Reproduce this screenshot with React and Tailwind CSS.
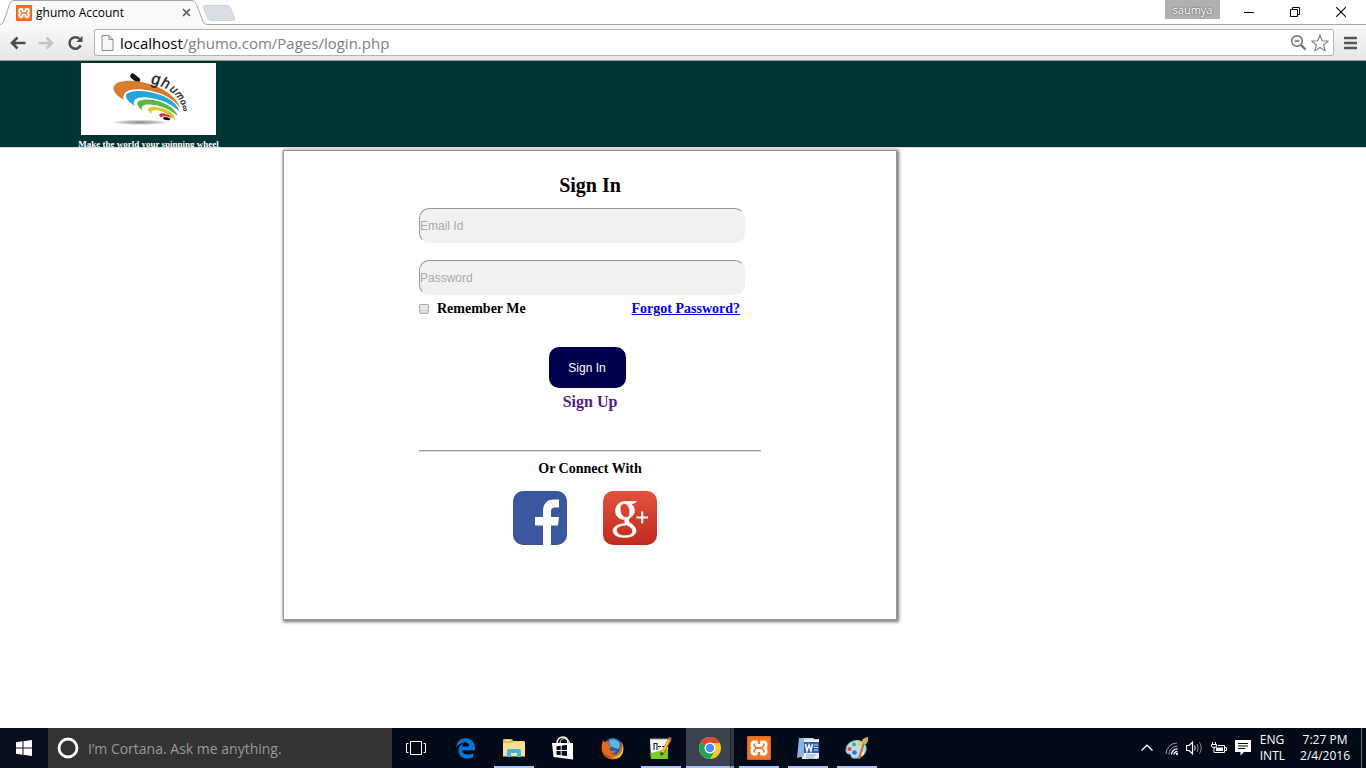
import React from "react";
import { FaEdgeLegacy } from "react-icons/fa";

const ui = "font-['Open_Sans','Noto_Sans',sans-serif]";
const serif = "font-['Liberation_Serif',serif]";
const sans = "font-['Liberation_Sans',sans-serif]";

function XamppIcon({ className }) {
  return (
    <svg className={className} viewBox="0 0 24 24" aria-hidden="true">
      <rect width="24" height="24" rx="2" fill="#f37623" />
      <path d="M.700 .7H23.300V23.300H.7Z" fill="none" stroke="#d9631a" strokeWidth="1" />
      <path d="M7 6H9.500V8.500Q9.500 9.500 10.500 9.500H13.500Q14.500 9.500 14.500 8.500V6H17Q19 6 19 8V10.500L17.500 12L19 13.500V16Q19 18 17 18H14.500V15.500Q14.500 14.500 13.500 14.500H10.500Q9.500 14.500 9.500 15.500V18H7Q5 18 5 16V13.500L6.500 12L5 10.500V8Q5 6 7 6Z" fill="none" stroke="#fff" strokeWidth="2.800" strokeLinejoin="round" />
    </svg>
  );
}

function TabStrip() {
  return (
    <div className={`relative z-10 -mb-px flex h-[25px] items-start bg-white ${ui}`}>
      <div className="relative h-[25px] w-[240px] shrink-0">
        <svg className="absolute inset-0" width="240" height="25" viewBox="0 0 240 25" aria-hidden="true">
          <path d="M0 24.500C3 24 3.500 22 4.500 19L9.500 4.500C10.500 1.500 12 .5 14 .5H191C194 .5 195.500 1.500 196.500 4.500L202.500 20C203.500 23 205 24.500 208 24.500V25H0Z" fill="#fafafa" />
          <path d="M0 24.500C3 24 3.500 22 4.500 19L9.500 4.500C10.500 1.500 12 .5 14 .5H191C194 .5 195.500 1.500 196.500 4.500L202.500 20C203.500 23 205 24.500 208 24.500H240" fill="none" stroke="#a5a5a5" />
          <path d="M205 5.500H227C229 5.500 230 6.500 230.500 8L234.500 18C235 20 234.500 20.500 232.500 20.500H212C209.500 20.500 208.500 20 207.500 18L203.500 8C203 6.500 203 5.500 205 5.500Z" fill="#d9dee5" stroke="#cdd2d9" />
        </svg>
        <div className="relative flex h-[25px] items-center pl-4">
          <XamppIcon className="size-4" />
          <span className="ml-1 w-[140px] text-[12px] leading-4">ghumo Account</span>
          <button aria-label="Close tab" className="ml-1.5 text-[#555]">
            <svg width="9" height="9" viewBox="0 0 9 9"><path d="M1 1L8 8M8 1L1 8" stroke="currentColor" strokeWidth="1.600" /></svg>
          </button>
        </div>
      </div>
      <div className="h-full flex-1 border-b border-[#a5a5a5]" />
      <div className="flex h-full items-start border-b border-[#a5a5a5] pr-0.5">
        <button className="mr-1.5 h-[19px] w-[55px] bg-[#b0b0b0] text-[11px] leading-[18px] text-white [text-shadow:0_0_2px_#333]">saumya</button>
        <button aria-label="Minimize" className="flex h-6 w-[46px] items-center justify-center">
          <svg width="10" height="10" viewBox="0 0 10 10"><path d="M0 5.500H10" stroke="#000" /></svg>
        </button>
        <button aria-label="Restore" className="flex h-6 w-[46px] items-center justify-center">
          <svg width="10" height="10" viewBox="0 0 10 10"><path d="M.5 2.500H7.500V9.500H.5ZM2.500 2.500V.5H9.500V7.500H7.500" fill="none" stroke="#000" /></svg>
        </button>
        <button aria-label="Close" className="flex h-6 w-[46px] items-center justify-center">
          <svg width="10" height="10" viewBox="0 0 10 10"><path d="M0 0L10 10M10 0L0 10" stroke="#000" strokeWidth="1.100" /></svg>
        </button>
      </div>
    </div>
  );
}

function Toolbar() {
  return (
    <div className={`flex h-[37px] items-center border-b border-[#9b9b9b] bg-linear-to-b from-[#fafafa] to-[#e6e6e6] pt-px pr-[9px] pl-[9px] ${ui}`}>
      <button aria-label="Back" className="mr-3 text-[#4d4d4d]">
        <svg width="17" height="14" viewBox="0 0 17 14"><path d="M8.500 1.500L3 7L8.500 12.500M3.500 7H16.500" fill="none" stroke="currentColor" strokeWidth="2.600" /></svg>
      </button>
      <button aria-label="Forward" className="mr-3 text-[#c3c3c3]">
        <svg width="17" height="14" viewBox="0 0 17 14"><path d="M8.500 1.500L14 7L8.500 12.500M13.500 7H.5" fill="none" stroke="currentColor" strokeWidth="2.600" /></svg>
      </button>
      <button aria-label="Reload" className="mr-2.5 text-[#4d4d4d]">
        <svg width="17" height="16" viewBox="0 0 17 16"><path d="M13.700 10.200A5.800 5.800 0 1 1 12.600 4" fill="none" stroke="currentColor" strokeWidth="2.500" /><path d="M15.500.8V7H9.300Z" fill="currentColor" /></svg>
      </button>
      <div className="flex h-[27px] flex-1 items-center rounded-xs border border-[#b3b3b3] bg-white pr-1 pl-1.5">
        <svg width="13" height="16" viewBox="0 0 13 16" aria-hidden="true"><path d="M1 .5H8L12 4.500V15.500H1Z" fill="#f6f6f6" stroke="#8b8b8b" /><path d="M8 .5V4.500H12" fill="none" stroke="#8b8b8b" /></svg>
        <div className="ml-1.5 flex-1 text-[15px] leading-6 text-[#808080]"><span className="text-black">localhost</span>/ghumo.com/Pages/login.php</div>
        <button aria-label="Zoom" className="mr-1">
          <svg width="17" height="17" viewBox="0 0 17 17"><circle cx="7" cy="7" r="5.300" fill="none" stroke="#6a6a6a" strokeWidth="1.500" /><path d="M4.500 7H9.500" stroke="#6a6a6a" strokeWidth="1.400" /><path d="M11 11L15.500 15.500" stroke="#6a6a6a" strokeWidth="2.200" /></svg>
        </button>
        <button aria-label="Bookmark this page">
          <svg width="18" height="18" viewBox="0 0 18 18"><path d="M9 1L11.200 6.700L17.300 7L12.600 10.900L14.200 16.900L9 13.500L3.800 16.900L5.400 10.900L.7 7L6.800 6.700Z" fill="#fff" stroke="#7c7c7c" strokeWidth="1.100" strokeLinejoin="round" /></svg>
        </button>
      </div>
      <button aria-label="Menu" className="ml-2.5">
        <svg width="13" height="14" viewBox="0 0 13 14"><path d="M1 2H12M1 7H12M1 12H12" stroke="#555" strokeWidth="2.600" strokeLinecap="round" /></svg>
      </button>
    </div>
  );
}

function Logo() {
  return (
    <svg className="block bg-white" width="135" height="72" viewBox="0 0 405 216" role="img" aria-label="ghumo logo">
      <defs>
        <radialGradient id="shade"><stop offset="0" stopColor="#888" /><stop offset=".6" stopColor="#c5c5c5" /><stop offset="1" stopColor="#fff" /></radialGradient>
      </defs>
      <ellipse cx="177" cy="178" rx="88" ry="8" fill="url(#shade)" />
      <path d="M155 39L170 51" stroke="#111" strokeWidth="15" strokeLinecap="round" />
      <path d="M128 110C105 98 95 82 98 72C104 50 160 46 215 66C262 82 290 110 298 136C280 108 240 86 190 80C150 76 122 84 128 110Z" fill="#d67c2c" />
      <path d="M160 128C140 116 131 102 136 94C150 78 205 82 245 98C280 114 292 130 295 146C275 124 240 108 205 104C170 100 153 108 160 128Z" fill="#25a5d8" />
      <path d="M184 142C168 130 166 120 172 115C190 104 230 110 255 124C275 134 288 148 290 158C270 142 245 130 220 126C190 122 178 128 184 142Z" fill="#56b947" />
      <path d="M214 152C202 146 198 138 204 134C220 126 250 136 265 144C275 150 282 160 282 172C265 156 245 144 230 142C216 140 208 144 214 152Z" fill="#d8cc36" />
      <path d="M240 164C232 158 234 152 242 151C255 151 268 158 274 166C262 160 248 156 240 164Z" fill="#d8333c" />
      <ellipse cx="257" cy="167" rx="11" ry="4" fill="#111" transform="rotate(12 257 167)" />
      <g className="font-['Liberation_Sans',sans-serif] italic" fill="#1a1a1a" stroke="#1a1a1a">
        <text fontSize="48" transform="translate(209 62) rotate(8)">g</text>
        <text fontSize="44" transform="translate(238 70) rotate(20)">h</text>
        <text fontSize="35" transform="translate(264 82) rotate(38)">u</text>
        <text fontSize="30" transform="translate(281 94) rotate(52)">m</text>
        <text fontSize="26" transform="translate(297 114) rotate(66)">o</text>
        <text fontSize="17" transform="translate(303 124) rotate(76)">.co</text>
      </g>
    </svg>
  );
}

function FacebookIcon() {
  return (
    <svg className="block" width="54" height="54" viewBox="0 0 54 54">
      <rect width="54" height="54" rx="10" fill="#3b589e" />
      <path d="M30 54V34.500H22V26H30V20.500C30 12 34.500 8.500 41 8.500H46V16.500H42C39 16.500 38 18 38 20.500V26H46L45 34.500H38V54Z" fill="#fff" />
    </svg>
  );
}

function GooglePlusIcon() {
  return (
    <svg className="block" width="54" height="54" viewBox="0 0 54 54">
      <defs><linearGradient id="gplus" x2="0" y2="1"><stop stopColor="#e2523f" /><stop offset="1" stopColor="#c02a1d" /></linearGradient></defs>
      <rect width="54" height="54" rx="10" fill="url(#gplus)" />
      <path fillRule="evenodd" d="M22 10.500H33.500L30.500 12.500H27.500C30.500 14.500 31.500 17 31.500 19.500C31.500 23 29.500 25 27.500 26.500C26 27.800 25.500 28.500 25.500 29.500C25.500 30.800 27 31.800 28.500 33C31.500 35.200 33 37.200 33 39.800C33 44 28.500 46.500 21.500 46.500C14 46.500 10 43.500 10 39.800C10 35.500 15 33 22.500 32.500C21.500 31.300 21.300 30 22 28.300C16 28.800 12.500 24.800 12.500 20C12.500 14.500 16.500 10.500 22 10.500ZM21 12.500C18 12.800 16.800 15.500 17.200 19C17.700 23 20 26.600 23 26.500C26 26.300 27.100 23.800 26.800 20C26.400 15.800 24 12.300 21 12.500ZM24 34C17.500 34.200 13.500 36 13.500 39.200C13.500 42.500 17 44.700 22.200 44.700C27 44.700 29.700 42.800 29.700 40C29.700 37.500 27.500 36 24 34Z" fill="#fff" stroke="#fff" strokeWidth=".6" />
      <path d="M33.500 26.500H45M39.200 20.500V32.500" stroke="#fff" strokeWidth="2" />
    </svg>
  );
}

const inputClass =
  "block h-[35px] w-[326px] rounded-[10px] border border-t-[#999] border-l-[#999] border-r-[#f1f1f1] border-b-[#f1f1f1] bg-[#f1f1f1] text-[12px] text-black outline-none placeholder:text-[#a9a9a9] placeholder:opacity-100";

function LoginCard() {
  return (
    <main className="flex-1 pt-0.5">
      <form className={`ml-[283px] flex min-h-[470px] w-[614px] max-w-full flex-col items-center border border-[#999] bg-white pt-5 shadow-[1px_1px_3px_1px_#777] ${serif}`} onSubmit={(e) => e.preventDefault()}>
        <h1 className="text-[20px] leading-7 font-bold">Sign In</h1>
        <div className="mt-[9px] w-[342px]">
          <input aria-label="Email Id" type="email" placeholder="Email Id" className={`${inputClass} ${sans}`} />
          <input aria-label="Password" type="password" placeholder="Password" className={`mt-[17px] ${inputClass} ${sans}`} />
          <div className="mt-1 flex w-[321px] items-center text-[14px] leading-5 font-bold">
            <input id="remember" type="checkbox" className="size-2.5 appearance-none rounded-xs border border-[#aaa] bg-linear-to-b from-[#eee] to-[#d8d8d8] checked:bg-[#555]" />
            <label htmlFor="remember" className="ml-2">Remember Me</label>
            <a href="#forgot" className="ml-auto text-[#0000ee] underline">Forgot Password?</a>
          </div>
          <div className="mt-7 flex flex-col items-center">
            <button type="submit" className={`mr-1.5 h-[41px] w-[77px] rounded-[10px] bg-[#00004d] text-[12px] text-white ${sans}`}>Sign In</button>
            <a href="#signup" className="mt-1 text-[16px] leading-5 font-bold text-[#551a8b]">Sign Up</a>
          </div>
          <hr className="mt-[38px] h-0.5 border-t border-b border-t-[#999] border-b-[#ddd]" />
          <h2 className="mt-[7px] text-center text-[14px] leading-5 font-bold">Or Connect With</h2>
          <div className="mt-3 mr-2.5 flex justify-center gap-9">
            <a href="#facebook" aria-label="Facebook"><FacebookIcon /></a>
            <a href="#google" aria-label="Google Plus"><GooglePlusIcon /></a>
          </div>
        </div>
      </form>
    </main>
  );
}

function TaskButton({ label, open, children }) {
  return (
    <button aria-label={label} className={`flex h-10 w-10 items-center justify-center border-b-2 pt-0.5 ${open ? "border-[#a9c4f5]" : "border-transparent"}`}>
      {children}
    </button>
  );
}

function Taskbar() {
  return (
    <footer className={`flex h-10 items-stretch bg-[#030a18] text-white ${ui}`}>
      <button aria-label="Start" className="flex w-12 items-center justify-center bg-[#08101f]">
        <svg width="16" height="16" viewBox="0 0 16 16"><path d="M0 2.200L6.500 1.300V7.500H0ZM7.500 1.200L16 0V7.500H7.500ZM0 8.500H6.500V14.700L0 13.800ZM7.500 8.500H16V16L7.500 14.800Z" fill="#fff" /></svg>
      </button>
      <div className="flex w-[344px] items-center bg-[#333] pl-[9px]">
        <svg width="22" height="22" viewBox="0 0 22 22" aria-hidden="true"><circle cx="11" cy="11" r="9" fill="none" stroke="#fff" strokeWidth="2.800" /></svg>
        <input aria-label="Search" placeholder="I’m Cortana. Ask me anything." className="ml-[9px] min-w-0 flex-1 bg-transparent text-[14px] outline-none placeholder:text-[#999]" />
      </div>
      <div className="flex gap-[9px] pl-1">
        <TaskButton label="Task view">
          <svg width="20" height="14" viewBox="0 0 20 14"><path d="M4.500.5H15.500V13.500H4.500ZM2.500 2.500H.5V11.500H2.500M17.500 2.500H19.500V11.500H17.500" fill="none" stroke="#fff" /></svg>
        </TaskButton>
        <TaskButton label="Edge"><FaEdgeLegacy className="size-[21px] text-[#0078d7]" /></TaskButton>
        <TaskButton label="File Explorer" open>
          <svg width="22" height="20" viewBox="0 0 22 20"><path d="M0 2Q0 1 1 1H9L10 3H21V18H0Z" fill="#e8b84a" /><path d="M2 2.500H7" stroke="#fff3c4" /><path d="M0 5H9L10 3.500H22V18.500H0Z" fill="#fbe08e" /><path d="M4 19V13Q4 11 6 11H16Q18 11 18 13V19H14V15H8V19Z" fill="#35b9ee" /></svg>
        </TaskButton>
        <TaskButton label="Store">
          <svg width="22" height="24" viewBox="0 0 22 24"><path d="M5 8C5 3 8 1 11 1C14 1 16 3 16 7" fill="none" stroke="#fff" strokeWidth="1.500" /><path d="M8 7C8.500 3 11 2 14 3Q18 4 18 8" fill="none" stroke="#fff" /><path d="M0 7L21 7V23.500L1.500 21Z" fill="#fff" /><path d="M4.500 10.300L8.700 9.700V14H4.500ZM9.700 9.600L15 9V14H9.700ZM4.500 15H8.700V19.300L4.500 18.800ZM9.700 15H15V20L9.700 19.400Z" fill="#050b18" /></svg>
        </TaskButton>
        <TaskButton label="Firefox">
          <svg width="23" height="23" viewBox="0 0 23 23"><circle cx="12" cy="10.500" r="9.700" fill="#1f5fa8" /><path d="M8 3Q14 1 18 5Q20 9 17 12L9 9Z" fill="#59b7e8" /><path d="M2 3Q2.500 4.500 4 5Q6.500 4 9 5.500Q7.500 7 8 8.500L11 9Q10 11 8 11.500Q9 14.500 12 14Q14 13.500 15 14Q13 17 9.500 16.500Q15 19.500 18 15Q19.500 12 18.500 9Q20 10 20 12Q21 8 19.500 4Q23 8 22.500 12.500Q21.500 22 12 22.500Q3 22 .7 14Q0 8 2 3Z" fill="#e66a1a" /><path d="M20 5Q23 10 20 16Q16 21 10 20Q18 24 21.500 16Q23.500 10 20 5Z" fill="#fcca3d" /><path d="M1 12Q4 20 12 20Q8 22 4 19Q1 16 1 12Z" fill="#c93817" /></svg>
        </TaskButton>
        <TaskButton label="Notepad++" open>
          <svg width="24" height="24" viewBox="0 0 24 24"><path d="M1 3H19V23H2Z" fill="#f8faf4" /><path d="M1.500 17L19 13V23H2Z" fill="#79cf2a" /><path d="M1.500 3H19" stroke="#999" strokeWidth="2" strokeDasharray="1 1" /><path d="M5 7V14M5 7.500H8V14M9 10.500H12M13 10.500H16" fill="none" stroke="#222" strokeWidth="1.100" /><path d="M13 18L21 3" stroke="#a96710" strokeWidth="3.500" /><path d="M13.500 16.500L20.500 3.500" stroke="#ffc738" strokeWidth="1.800" /><path d="M20 4L21.500 1.500" stroke="#d55" strokeWidth="3" /><path d="M11.700 16L14.500 18L11.500 20Z" fill="#333" /></svg>
        </TaskButton>
        <div className="-mx-1 flex w-12 bg-[#3d434e]">
          <button aria-label="Chrome" className="flex h-10 flex-1 items-center justify-center border-b-2 border-[#a9c4f5] pt-0.5 pl-1">
            <svg width="22" height="22" viewBox="0 0 22 22"><circle cx="11" cy="11" r="11" fill="#fbc829" /><path d="M1.500 5.500A11 11 0 0 0 11 22L15.800 13.700L11 11Z" fill="#1da35a" /><path d="M11 11L1.500 5.500A11 11 0 0 1 20.500 5.500L20.800 6H11Z" fill="#df4639" /><circle cx="11" cy="11" r="5.500" fill="#fff" /><circle cx="11" cy="11" r="4.200" fill="#4b8bf4" /></svg>
          </button>
          <span className="w-1 border-b-2 border-l border-b-[#8ba2cb] border-l-[#1c222e] bg-[#30363f]" />
        </div>
        <TaskButton label="XAMPP" open><XamppIcon className="size-6" /></TaskButton>
        <TaskButton label="Word" open>
          <svg width="23" height="23" viewBox="0 0 23 23"><path d="M4 1H16L20 5V22L4 20Z" fill="#bdd6f2" /><path d="M6 3L22 2V21.500L5 22Z" fill="#e9f1fa" /><path d="M2 1H7V19L0 21Z" fill="#8db5e3" /><path d="M7 5H22V16H7Z" fill="#2c5eb4" /><path d="M8.500 7L10 14L12 8L14 14L15.500 7" fill="none" stroke="#fff" strokeWidth="1.500" /><path d="M17 8H21M17 10.500H21M17 13H21" stroke="#c3d7f5" /><path d="M9 18H19M9 20H17" stroke="#8ba7cf" /></svg>
        </TaskButton>
        <TaskButton label="Paint" open>
          <svg width="24" height="24" viewBox="0 0 24 24"><path d="M1 14C1 8 7 4 13 4.500C18 5 22 9 21 14C20 20 14 23 8 22C5 21.500 7 18 4.500 18C2 18 1 16.500 1 14Z" fill="#b9dcef" stroke="#85b4d0" /><circle cx="4.500" cy="13" r="2" fill="#d94b40" /><circle cx="9" cy="8.500" r="2" fill="#52b250" /><circle cx="14.500" cy="8" r="2" fill="#eeca3f" /><circle cx="9.500" cy="16.500" r="2.300" fill="#3571c8" /><circle cx="17" cy="17.500" r="2" fill="#fff" /><path d="M14 23L19 6" stroke="#c96f25" strokeWidth="2.200" /><path d="M17 7Q16 2 23 1Q24 6 20.500 8.500Z" fill="#d6a668" /></svg>
        </TaskButton>
      </div>
      <div className="ml-auto flex items-center">
        <button aria-label="Show hidden icons" className="mr-3">
          <svg className="block" width="12" height="8" viewBox="0 0 12 8"><path d="M.5 6.500L6 1.200L11.500 6.500" fill="none" stroke="#fff" strokeWidth="1.300" /></svg>
        </button>
        <button aria-label="Network" className="mr-2">
          <svg className="block" width="13" height="13" viewBox="0 0 13 13"><path d="M1 12A11 11 0 0 1 12 1M4 12.500A8 8 0 0 1 12.500 4.200" fill="none" stroke="#9a9fa8" /><path d="M6.500 12.500A5.500 5.500 0 0 1 12.500 7M9 12.500A3.500 3.500 0 0 1 12.500 9.500" fill="none" stroke="#fff" strokeWidth="1.300" /><circle cx="12" cy="12" r="1.200" fill="#fff" /></svg>
        </button>
        <button aria-label="Volume" className="mr-2">
          <svg className="block" width="17" height="14" viewBox="0 0 17 14"><path d="M.5 4.500H3L6.500 1.200V12.800L3 9.500H.5Z" fill="none" stroke="#fff" strokeWidth="1.200" /><path d="M8.500 4.500Q10 7 8.500 9.500" fill="none" stroke="#fff" /><path d="M11 3Q13.500 7 11 11M13.500 1.500Q17 7 13.500 12.500" fill="none" stroke="#8c919b" /></svg>
        </button>
        <button aria-label="Battery" className="mr-2">
          <svg className="block" width="16" height="13" viewBox="0 0 16 13"><path d="M1.500 0V2M4.500 0V2M.5 2.500H5.500V4Q5.500 5.500 3 5.500Q.5 5.500 .5 4ZM3 5.500V10.500H13.500V3.500H7M14 5.500H15.500V8.500H14" fill="none" stroke="#fff" /><path d="M5 5.500H12V9H5Z" fill="#fff" /></svg>
        </button>
        <button aria-label="Notifications" className="mr-[9px]">
          <svg className="block" width="16" height="16" viewBox="0 0 16 16"><path d="M0 0H16V12H9L5.500 15.500V12H0Z" fill="#fff" /><path d="M3 3.500H13M3 6H13M3 8.500H10" stroke="#030a18" /></svg>
        </button>
        <button className="mr-[15px] text-left text-[12px] leading-4">ENG<br />INTL</button>
        <button className="mr-[11px] text-center text-[12px] leading-4">7:27 PM<br />2/4/2016</button>
        <button aria-label="Show desktop" className="h-full w-[5px] border-l border-[#686d76]" />
      </div>
    </footer>
  );
}

export default function App() {
  return (
    <div className="flex min-h-screen flex-col bg-white text-black">
      <TabStrip />
      <Toolbar />
      <header className={`h-[87px] overflow-hidden border-b border-[#dedede] bg-[#003333] pt-0.5 pl-[75px] ${serif}`}>
        <a href="#home" className="flex w-[147px] flex-col items-center text-white">
          <Logo />
          <span className="mt-[3px] text-[9px] leading-3 font-bold whitespace-nowrap underline">Make the world your spinning wheel</span>
        </a>
      </header>
      <LoginCard />
      <Taskbar />
    </div>
  );
}
